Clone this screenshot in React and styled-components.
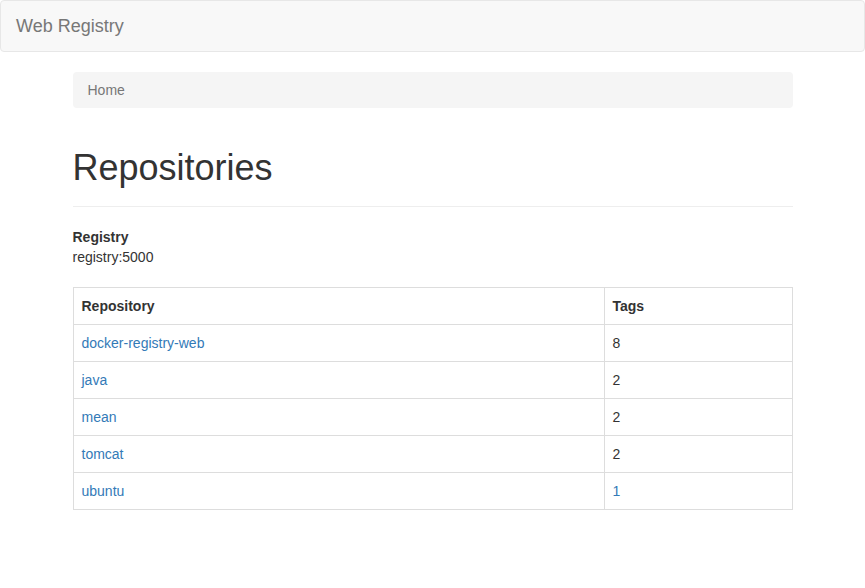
import React from "react";
import styled, { createGlobalStyle } from "styled-components";

const Global = createGlobalStyle`
  * { box-sizing: border-box; }
  body {
    margin: 0;
    font-family: "Liberation Sans", Arial, Helvetica, sans-serif;
    font-size: 14px;
    line-height: 1.42857143;
    color: #333;
    background: #fff;
  }
`;

const Navbar = styled.nav`
  min-height: 50px;
  background: #f8f8f8;
  border: 1px solid #e7e7e7;
  border-radius: 4px;
  margin-bottom: 20px;
  display: flex;
  align-items: center;
`;

const Brand = styled.a`
  display: block;
  height: 50px;
  padding: 15px;
  font-size: 18px;
  line-height: 20px;
  color: #777;
  text-decoration: none;
`;

const Container = styled.div`
  width: 750px;
  padding: 0 15px;
  margin: 0 auto;
`;

const Breadcrumb = styled.ol`
  list-style: none;
  margin: 0 0 20px;
  padding: 8px 15px;
  background: #f5f5f5;
  border-radius: 4px;
  color: #777;
`;

const PageHeader = styled.div`
  margin: 40px 0 20px;
  padding-bottom: 9px;
  border-bottom: 1px solid #eee;
`;

const Title = styled.h1`
  margin: 0 0 10px;
  font-size: 36px;
  font-weight: 500;
  line-height: 39px;
  color: #333;
`;

const Dl = styled.dl`
  margin: 0 0 20px;
`;

const Dt = styled.dt`
  font-weight: bold;
`;

const Dd = styled.dd`
  margin: 0;
`;

const Table = styled.table`
  width: 100%;
  border-collapse: collapse;
  border-spacing: 0;
  border: 1px solid #ddd;
  margin-bottom: 20px;
`;

const Th = styled.th`
  text-align: left;
  padding: 8px;
  line-height: 20px;
  border: 1px solid #ddd;
  font-weight: bold;
  width: ${(p) => p.$w || "auto"};
`;

const Td = styled.td`
  padding: 8px;
  line-height: 20px;
  border: 1px solid #ddd;
  vertical-align: top;
`;

const Link = styled.a`
  color: #337ab7;
  text-decoration: none;
`;

const repos = [
  { name: "docker-registry-web", tags: 8 },
  { name: "java", tags: 2 },
  { name: "mean", tags: 2 },
  { name: "tomcat", tags: 2 },
  { name: "ubuntu", tags: 1, link: true },
];

export default function App() {
  return (
    <>
      <Global />
      <Navbar>
        <Brand href="#">Web Registry</Brand>
      </Navbar>
      <Container>
        <Breadcrumb>
          <li>Home</li>
        </Breadcrumb>
        <PageHeader>
          <Title>Repositories</Title>
        </PageHeader>
        <Dl>
          <Dt>Registry</Dt>
          <Dd>registry:5000</Dd>
        </Dl>
        <Table>
          <thead>
            <tr>
              <Th>Repository</Th>
              <Th $w="188px">Tags</Th>
            </tr>
          </thead>
          <tbody>
            {repos.map((r) => (
              <tr key={r.name}>
                <Td>
                  <Link href="#">{r.name}</Link>
                </Td>
                <Td>{r.link ? <Link href="#">{r.tags}</Link> : r.tags}</Td>
              </tr>
            ))}
          </tbody>
        </Table>
      </Container>
    </>
  );
}
